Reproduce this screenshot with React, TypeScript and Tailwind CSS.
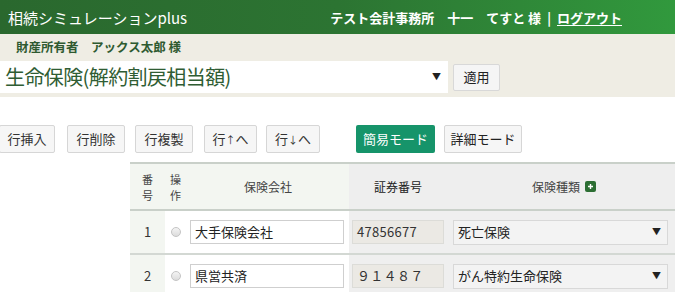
const rows = [
  { no: 1, company: '大手保険会社', policy: '47856677', kind: '死亡保険' },
  { no: 2, company: '県営共済', policy: '９１４８７', kind: 'がん特約生命保険' },
];

export default function App() {
  return (
    <div className="h-[292px] w-[675px] overflow-hidden bg-white font-['Meiryo','Noto_Sans_CJK_JP',sans-serif] text-[#333]">
      {/* ヘッダー */}
      <header className="flex h-[34px] items-center justify-between bg-linear-to-r from-[#2a682e] via-[#2c7432] to-[#31993d] pr-[53px] pl-2 text-white">
        <div className="text-[15px] leading-none">相続シミュレーションplus</div>
        <div className="flex items-center text-[13px] font-bold leading-none">
          <span>テスト会計事務所　十一　てすと 様</span>
          <span className="mx-[6px]">|</span>
          <a className="underline underline-offset-2">ログアウト</a>
        </div>
      </header>

      {/* 所有者 + 財産種別 */}
      <div className="h-[63px] bg-[#efede4]">
        <div className="flex h-[27px] items-center pl-4 text-[12.5px] font-bold text-[#2e5a30]">
          財産所有者　アックス太郎 様
        </div>
        <div className="flex items-center">
          <div className="flex h-[32px] w-[448px] items-center justify-between bg-white pr-[7px] pl-[5px]">
            <span className="text-[20px] leading-none tracking-[-0.6px] text-[#2f5d33]">
              生命保険(解約割戻相当額)
            </span>
            <span className="text-[9px] text-[#222]">▼</span>
          </div>
          <button className="ml-[5px] h-[27px] w-[47px] rounded-[2px] border border-[#d8d8d8] bg-[#f5f5f5] text-[13px] text-[#222]">
            適用
          </button>
        </div>
      </div>

      {/* 操作ボタン */}
      <div className="mt-[28px] flex items-center text-[13px]">
        <button className="-ml-[1px] h-[28px] w-[56px] rounded-[2px] border border-[#d6d6d6] bg-[#f6f6f6] text-[#333]">
          行挿入
        </button>
        <button className="ml-[12px] h-[28px] w-[58px] rounded-[2px] border border-[#d6d6d6] bg-[#f6f6f6] text-[#333]">
          行削除
        </button>
        <button className="ml-[10px] h-[28px] w-[58px] rounded-[2px] border border-[#d6d6d6] bg-[#f6f6f6] text-[#333]">
          行複製
        </button>
        <button className="ml-[11px] h-[28px] w-[53px] rounded-[2px] border border-[#d6d6d6] bg-[#f6f6f6] text-[#333]">
          行<span className="text-[10px]">↑</span>へ
        </button>
        <button className="ml-[9px] h-[28px] w-[54px] rounded-[2px] border border-[#d6d6d6] bg-[#f6f6f6] text-[#333]">
          行<span className="text-[10px]">↓</span>へ
        </button>
        <button className="ml-[36px] h-[28px] w-[79px] rounded-[2px] bg-[#16946a] text-white">
          簡易モード
        </button>
        <button className="ml-[9px] h-[28px] w-[78px] rounded-[2px] border border-[#d6d6d6] bg-[#f6f6f6] text-[#222]">
          詳細モード
        </button>
      </div>

      {/* テーブル */}
      <div className="mt-[9px] ml-[130px] w-[545px] border-t-2 border-[#c9d0c9]">
        <div className="grid h-[47px] grid-cols-[35px_22px_162px_98px_1fr] border-b-2 border-[#c9d0c9] text-[12px] text-[#444]">
          <div className="flex items-center justify-center bg-[#f3f6f1] text-center text-[11px] leading-[16px]">
            番<br />号
          </div>
          <div className="flex items-center bg-[#f3f6f1] pl-[5px] text-[11px] leading-[16px]">
            操<br />作
          </div>
          <div className="flex items-center justify-center bg-[#f3f6f1]">保険会社</div>
          <div className="flex items-center justify-center bg-[#eeeeee] text-[#222]">証券番号</div>
          <div className="flex items-center justify-center gap-[5px] bg-[#eeeeee] pl-[6px]">
            <span>保険種類</span>
            <span className="flex h-[11px] w-[11px] items-center justify-center rounded-[2px] bg-[#2c6e33]">
              <svg width="7" height="7" viewBox="0 0 7 7">
                <path d="M3.5 1v5M1 3.5h5" stroke="white" strokeWidth="1.4" />
              </svg>
            </span>
          </div>
        </div>

        {rows.map((r) => (
          <div
            key={r.no}
            className="grid h-[44px] grid-cols-[35px_22px_162px_98px_1fr] border-b-2 border-[#d3d8d3] text-[13px]"
          >
            <div className="flex items-center justify-center bg-[#f3f6f1] text-[#333]">{r.no}</div>
            <div className="flex items-center justify-center">
              <span className="h-[10px] w-[10px] rounded-full border border-[#c4c4c4] bg-linear-to-b from-[#f4f4f4] to-[#dcdcdc]" />
            </div>
            <div className="flex items-center pr-[5px] pl-[3px]">
              <div className="flex h-[24px] w-full items-center border border-[#cfcfcf] bg-white px-[4px] text-[#222]">
                {r.company}
              </div>
            </div>
            <div className="flex items-center bg-[#efefef] pr-[3px] pl-[3px]">
              <div className="flex h-[24px] w-full items-center border border-[#dcdcd8] bg-[#ebe9e4] px-[4px] tracking-[0.3px] text-[#333]">
                {r.policy}
              </div>
            </div>
            <div className="flex items-center bg-[#efefef] pr-[7px] pl-[6px]">
              <div className="flex h-[25px] w-full items-center justify-between border border-[#d8d8d8] bg-[#f3f3f3] pr-[6px] pl-[4px] text-[#222]">
                <span>{r.kind}</span>
                <span className="text-[9px]">▼</span>
              </div>
            </div>
          </div>
        ))}
      </div>
    </div>
  );
}
